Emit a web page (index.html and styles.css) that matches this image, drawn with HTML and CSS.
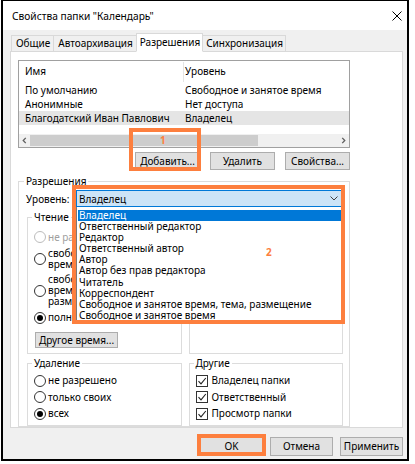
FILE: index.html
```html
<!DOCTYPE html>
<html lang="ru">
<head>
<meta charset="utf-8">
<title>Свойства папки</title>
<link rel="stylesheet" href="styles.css">
</head>
<body>
<div class="window">
  <div class="titlebar">
    <span class="title">Свойства папки "Календарь"</span>
    <svg class="close" viewBox="0 0 10 10"><path d="M0.5 0.5L9.5 9.5M9.5 0.5L0.5 9.5"/></svg>
  </div>
  <div class="dlg">
    <div class="tabs">
      <div class="tab">Общие</div>
      <div class="tab">Автоархивация</div>
      <div class="tab active">Разрешения</div>
      <div class="tab">Синхронизация</div>
    </div>
    <div class="panel">
      <div class="listview">
        <div class="lv-row lv-header"><div class="c1">Имя</div><div class="c2">Уровень</div></div>
        <div class="lv-row"><div class="c1">По умолчанию</div><div class="c2">Свободное и занятое время</div></div>
        <div class="lv-row"><div class="c1">Анонимные</div><div class="c2">Нет доступа</div></div>
        <div class="lv-row selected"><div class="c1">Благодатский Иван Павлович</div><div class="c2">Владелец</div></div>
        <div class="lv-fill"></div>
        <div class="hscroll">
          <span class="arrow"><svg viewBox="0 0 6 8"><path d="M4.5 0.8L1.5 4L4.5 7.2"/></svg></span>
          <span class="thumb"></span>
          <span class="track"></span>
          <span class="arrow"><svg viewBox="0 0 6 8"><path d="M1.5 0.8L4.5 4L1.5 7.2"/></svg></span>
        </div>
      </div>
      <div class="list-buttons">
        <div class="mark-host">
          <button class="btn">Добавить...</button>
          <div class="mark mark1"><span class="mark-num">1</span></div>
        </div>
        <button class="btn">Удалить</button>
        <button class="btn">Свойства...</button>
      </div>
      <fieldset class="perm">
        <legend>Разрешения</legend>
        <div class="level-row">
          <span class="level-label">Уровень:</span>
          <div class="combo-host">
            <div class="combo">
              <span>Владелец</span>
              <svg class="chev" viewBox="0 0 8 5"><path d="M0.5 0.5L4 4L7.5 0.5"/></svg>
            </div>
            <ul class="dropdown">
              <li class="sel">Владелец</li>
              <li>Ответственный редактор</li>
              <li>Редактор</li>
              <li>Ответственный автор</li>
              <li>Автор</li>
              <li>Автор без прав редактора</li>
              <li>Читатель</li>
              <li>Корреспондент</li>
              <li>Свободное и занятое время, тема, размещение</li>
              <li>Свободное и занятое время</li>
            </ul>
            <div class="mark mark2"><span class="mark-num">2</span></div>
          </div>
        </div>
        <div class="groups">
          <fieldset class="grp">
            <legend>Чтение</legend>
            <div class="opts">
              <div class="opt disabled"><span class="radio"></span><span>не разрешено</span></div>
              <div class="opt"><span class="radio"></span><span>свободное/занятое<br>время</span></div>
              <div class="opt"><span class="radio"></span><span>свободное/занятое<br>время, тема,<br>размещение</span></div>
              <div class="opt"><span class="radio on"></span><span>полностью</span></div>
            </div>
            <button class="btn other-time">Другое время...</button>
          </fieldset>
          <fieldset class="grp write"></fieldset>
          <fieldset class="grp small">
            <legend>Удаление</legend>
            <div class="opt row"><span class="radio"></span><span>не разрешено</span></div>
            <div class="opt row"><span class="radio"></span><span>только своих</span></div>
            <div class="opt row"><span class="radio on"></span><span>всех</span></div>
          </fieldset>
          <fieldset class="grp small">
            <legend>Другие</legend>
            <div class="opt row"><span class="check"><svg viewBox="0 0 10 10"><path d="M1.5 5.2L4 7.8L8.8 2"/></svg></span><span>Владелец папки</span></div>
            <div class="opt row"><span class="check"><svg viewBox="0 0 10 10"><path d="M1.5 5.2L4 7.8L8.8 2"/></svg></span><span>Ответственный</span></div>
            <div class="opt row"><span class="check"><svg viewBox="0 0 10 10"><path d="M1.5 5.2L4 7.8L8.8 2"/></svg></span><span>Просмотр папки</span></div>
          </fieldset>
        </div>
      </fieldset>
    </div>
    <div class="dialog-buttons">
      <div class="mark-host">
        <button class="btn dbtn">OK</button>
        <div class="mark mark-ok"></div>
      </div>
      <button class="btn dbtn">Отмена</button>
      <button class="btn dbtn">Применить</button>
    </div>
  </div>
</div>
</body>
</html>
```

FILE: styles.css
```css
* { box-sizing: border-box; }
html, body { margin: 0; padding: 0; }
body {
  background: #fff;
  font-family: "Noto Sans", "Open Sans", sans-serif;
  font-size: 10px;
  color: #000;
}
.window {
  margin-left: 1px;
  width: 408px;
  height: 461px;
  border: 2px solid #000;
  border-top-width: 1px;
  background: #f0f0f0;
  display: flex;
  flex-direction: column;
}
.titlebar {
  height: 29px;
  flex: none;
  background: #fff;
  display: flex;
  align-items: center;
  justify-content: space-between;
  padding: 0 5px 0 9px;
  font-size: 10.2px;
}
.close { width: 10px; height: 10px; }
.close path { stroke: #000; stroke-width: 1; fill: none; }
.dlg {
  flex: 1;
  display: flex;
  flex-direction: column;
  padding: 3px 4px 3px 7px;
}
.tabs {
  display: flex;
  align-items: flex-end;
  height: 19px;
  margin-bottom: -1px;
  padding-left: 2px;
  position: relative;
  z-index: 1;
}
.tab {
  height: 17px;
  line-height: 15px;
  padding: 0 3px 0 4px;
  border: 1px solid #d9d9d9;
  margin-left: -1px;
  background: #f0f0f0;
  white-space: nowrap;
}
.tab:last-child { padding: 0 2px 0 3px; }
.tab.active {
  height: 19px;
  line-height: 17px;
  padding: 0 2px 0 3px;
  background: #fff;
  border-bottom-color: #fff;
  position: relative;
}
.panel {
  height: 377px;
  background: #fff;
  border: 1px solid #d9d9d9;
  padding: 8px 0 0 7px;
  display: flex;
  flex-direction: column;
}
.listview {
  width: 332px;
  height: 89px;
  border: 1px solid #a0a0a0;
  display: flex;
  flex-direction: column;
}
.lv-row {
  display: grid;
  grid-template-columns: 165px 1fr;
  height: 14px;
  line-height: 14px;
  white-space: nowrap;
}
.lv-row .c1 { padding-left: 6px; }
.lv-row .c2 { padding-left: 1px; }
.lv-header { height: 22px; line-height: 20px; }
.lv-header .c1 { border-right: 1px solid #e5e5e5; margin: 1px 0; line-height: 18px; }
.lv-row.selected { background: #e5e5e5; }
.lv-fill { flex: 1; }
.hscroll {
  height: 13px;
  background: #f0f0f0;
  display: flex;
  align-items: center;
}
.hscroll .arrow { width: 11px; height: 13px; display: flex; align-items: center; justify-content: center; }
.hscroll .arrow svg { width: 5px; height: 7px; }
.hscroll .arrow path { stroke: #606060; stroke-width: 1.6; fill: none; }
.hscroll .thumb { width: 228px; height: 11px; background: #cdcdcd; }
.hscroll .track { flex: 1; }
.list-buttons {
  width: 332px;
  margin-top: 4px;
  display: flex;
  justify-content: flex-end;
  gap: 10px;
}
.btn {
  font: inherit;
  color: #000;
  background: #e1e1e1;
  border: 1px solid #adadad;
  border-radius: 0;
  padding: 0;
  margin: 0;
  width: 65px;
  height: 18px;
  line-height: 16px;
  white-space: nowrap;
}
.mark-host { position: relative; display: flex; }
.mark {
  position: absolute;
  border: 4px solid #fd7f3e;
  pointer-events: none;
}
.mark-num {
  display: block;
  color: #fd7f3e;
  font-weight: bold;
  font-size: 10px;
  line-height: 11px;
}
.mark1 { left: -6px; top: -24px; width: 72px; height: 43px; padding: 3px 0 0 27px; }
.mark2 { left: -4px; top: -5px; width: 273px; height: 139px; padding: 58px 0 0 190px; z-index: 3; }
.mark2 .mark-num { width: 10px; }
.mark-ok { left: -3px; top: -3px; width: 69px; height: 22px; }
.perm {
  width: 332px;
  margin: 5px 0 0;
  border: 1px solid #dcdcdc;
  padding: 2px 6px 0 8px;
  min-width: 0;
  flex: 1;
}
legend {
  padding: 0 2px;
  line-height: 13px;
}
.perm > legend { margin-left: -3px; }
.level-row {
  display: flex;
  align-items: center;
  height: 17px;
}
.level-label { width: 50px; flex: none; margin-left: -1px; }
.combo-host { position: relative; flex: 1; z-index: 2; }
.combo {
  height: 17px;
  background: #cce4f7;
  border: 1px solid #0078d7;
  display: flex;
  align-items: center;
  justify-content: space-between;
  padding: 0 4px 0 2px;
}
.chev { width: 8px; height: 5px; }
.chev path { stroke: #404040; stroke-width: 1; fill: none; }
.dropdown {
  position: absolute;
  left: 0;
  top: 17px;
  width: 100%;
  height: 114px;
  margin: 0;
  padding: 3px 1px 0;
  list-style: none;
  background: #fff;
  border: 1px solid #7a7a7a;
  border-top: none;
}
.dropdown li {
  height: 11.1px;
  line-height: 11px;
  padding-left: 1px;
  white-space: nowrap;
}
.dropdown li.sel { background: #0078d7; color: #fff; }
.groups {
  margin-top: 4px;
  display: grid;
  grid-template-columns: 1fr 1fr;
  column-gap: 7px;
  row-gap: 3px;
}
.grp {
  margin: 0;
  min-width: 0;
  border: 1px solid #dcdcdc;
  padding: 7px 4px 5px 6px;
  display: flex;
  flex-direction: column;
  align-items: flex-start;
}
.grp > legend { margin-left: -2px; }
.grp.write { padding: 0; }
.grp.small { padding: 3px 4px 3px 6px; }
.opts { display: flex; flex-direction: column; gap: 4.5px; }
.opt {
  display: flex;
  align-items: center;
  gap: 2px;
  line-height: 11px;
  white-space: nowrap;
}
.opt.row { height: 16.5px; }
.opt.disabled { color: #a0a0a0; }
.radio {
  width: 12px;
  height: 12px;
  flex: none;
  border: 1px solid #333;
  border-radius: 50%;
  background: #fff;
  display: flex;
  align-items: center;
  justify-content: center;
}
.opt.disabled .radio { border-color: #bcbcbc; }
.radio.on::after {
  content: "";
  width: 6px;
  height: 6px;
  border-radius: 50%;
  background: #000;
}
.check {
  width: 12px;
  height: 12px;
  flex: none;
  border: 1px solid #333;
  background: #fff;
  margin-right: 2px;
  display: flex;
  align-items: center;
  justify-content: center;
}
.check svg { width: 10px; height: 10px; }
.check path { stroke: #222; stroke-width: 1.1; fill: none; }
.other-time { width: 83px; height: 16px; line-height: 14px; margin-top: 8px; margin-left: 1px; }
.dialog-buttons {
  margin-top: 9px;
  display: flex;
  justify-content: flex-end;
  gap: 7px;
}
.dbtn { width: 63px; height: 19px; line-height: 17px; }
```
